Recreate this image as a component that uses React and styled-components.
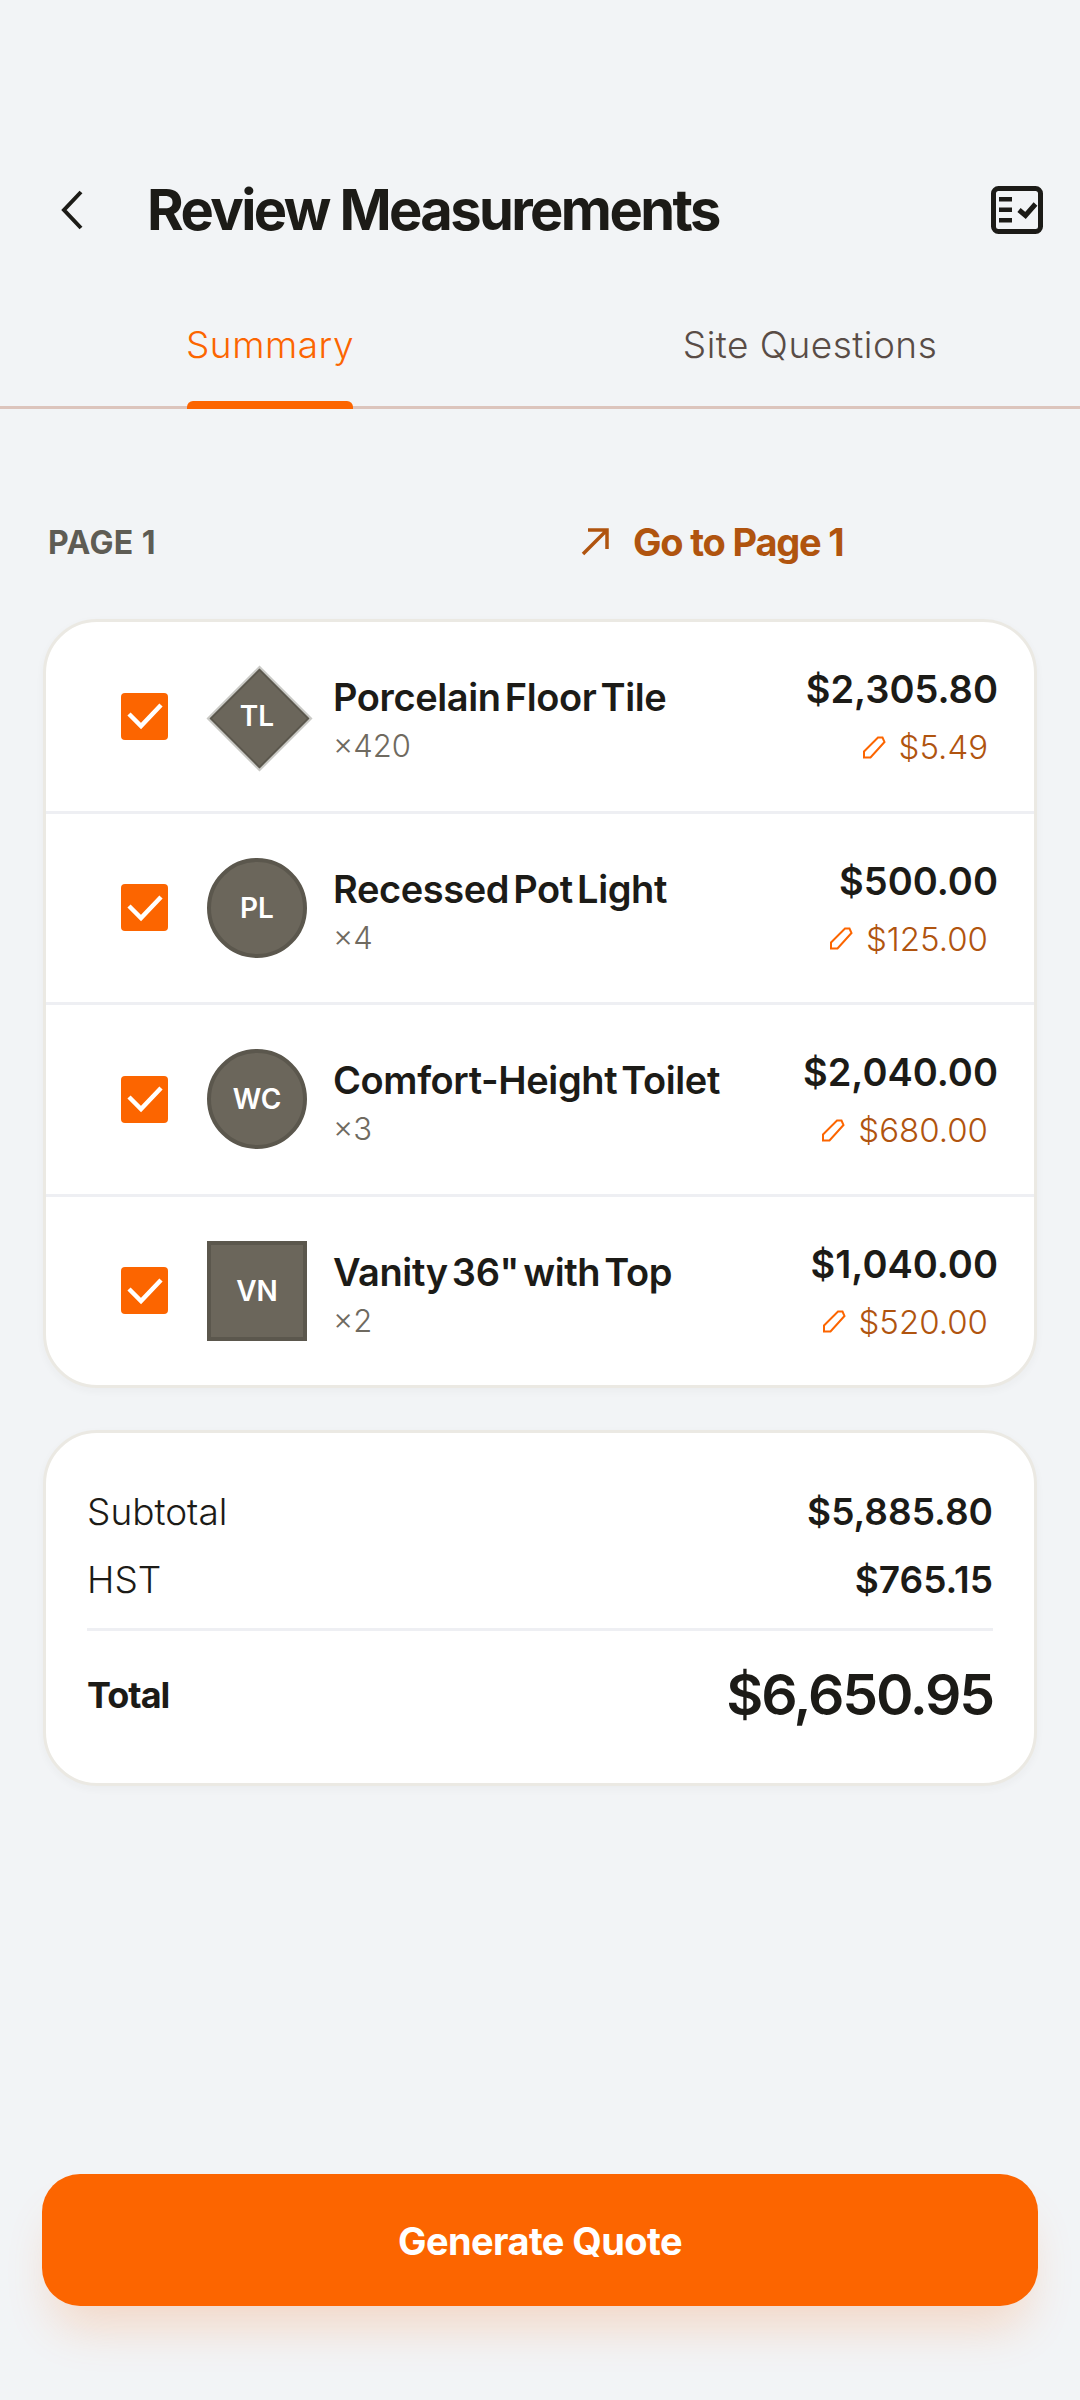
import React from 'react';
import styled, { createGlobalStyle } from 'styled-components';

const items = [
  { id: 'TL', shape: 'diamond', name: 'Porcelain Floor Tile', qty: '×420', total: '$2,305.80', unit: '$5.49' },
  { id: 'PL', shape: 'circle', name: 'Recessed Pot Light', qty: '×4', total: '$500.00', unit: '$125.00' },
  { id: 'WC', shape: 'circle', name: 'Comfort-Height Toilet', qty: '×3', total: '$2,040.00', unit: '$680.00' },
  { id: 'VN', shape: 'square', name: 'Vanity 36" with Top', qty: '×2', total: '$1,040.00', unit: '$520.00' },
];

function App() {
  return (
    <Page>
      <GlobalStyle />
      <Header>
        <BackButton>
          <svg width="24" height="42" viewBox="0 0 24 42" fill="none">
            <path d="M21 3 L4 21 L21 39" stroke="#1c1b17" strokeWidth="4" />
          </svg>
        </BackButton>
        <Title>Review Measurements</Title>
        <ChecklistButton>
          <svg width="52" height="48" viewBox="0 0 52 48" fill="none">
            <rect x="2.5" y="2.5" width="47" height="43" rx="5" stroke="#1c1b17" strokeWidth="5" />
            <path d="M8 11h13v4.5H8zM8 21.500h13v4.500H8zM8 32h13v4.500H8z" fill="#1c1b17" />
            <path d="M28 24l6.500 5.500L44.500 18" stroke="#1c1b17" strokeWidth="5" />
          </svg>
        </ChecklistButton>
      </Header>

      <Tabs>
        <Tab $active>Summary</Tab>
        <Tab>Site Questions</Tab>
      </Tabs>

      <SectionHead>
        <PageLabel>PAGE 1</PageLabel>
        <PageLink>
          <svg width="28" height="28" viewBox="0 0 28 28" fill="none">
            <path d="M2 26 L26 2 M7 2 H26 V21" stroke="#b0540f" strokeWidth="3.500" />
          </svg>
          <span>Go to Page 1</span>
        </PageLink>
      </SectionHead>

      <Card>
        {items.map((item) => (
          <Row key={item.id}>
            <CheckBox>
              <svg width="36" height="28" viewBox="0 0 36 28" fill="none">
                <path d="M2 12 L14 24 L34 3" stroke="#fff" strokeWidth="4.500" />
              </svg>
            </CheckBox>
            <Thumb $shape={item.shape}>
              <span>{item.id}</span>
            </Thumb>
            <ItemText>
              <ItemName>{item.name}</ItemName>
              <ItemQty>{item.qty}</ItemQty>
            </ItemText>
            <Prices>
              <ItemTotal>{item.total}</ItemTotal>
              <UnitPrice>
                <svg width="23" height="23" viewBox="0 0 23 23" fill="none">
                  <path d="M1 15.500 L15 1.500 H19.500 L21.500 6 L7.500 21.500 H1 Z" stroke="#fc6500" strokeWidth="2" />
                </svg>
                <span>{item.unit}</span>
              </UnitPrice>
            </Prices>
          </Row>
        ))}
      </Card>

      <SummaryCard>
        <SummaryRow>
          <SummaryLabel>Subtotal</SummaryLabel>
          <SummaryValue>$5,885.80</SummaryValue>
        </SummaryRow>
        <SummaryRow>
          <SummaryLabel>HST</SummaryLabel>
          <SummaryValue>$765.15</SummaryValue>
        </SummaryRow>
        <TotalRow>
          <TotalLabel>Total</TotalLabel>
          <TotalValue>$6,650.95</TotalValue>
        </TotalRow>
      </SummaryCard>

      <Footer>
        <GenerateButton>Generate Quote</GenerateButton>
      </Footer>
    </Page>
  );
}

const GlobalStyle = createGlobalStyle`
  html, body {
    margin: 0;
    padding: 0;
    background: #f2f4f6;
  }
  * {
    box-sizing: border-box;
  }
`;

const Page = styled.div`
  width: 1080px;
  height: 2400px;
  display: flex;
  flex-direction: column;
  background: #f2f4f6;
  color: #1c1b17;
  font-family: Inter, "Liberation Sans", sans-serif;
`;

const Header = styled.header`
  display: flex;
  align-items: center;
  height: 100px;
  margin-top: 160px;
  padding: 0 37px 0 60px;
`;

const BackButton = styled.div`
  display: flex;
  width: 87px;
`;

const Title = styled.h1`
  flex: 1;
  margin: 0;
  font-size: 56px;
  font-weight: 700;
  letter-spacing: -2.6px;
`;

const ChecklistButton = styled.div`
  display: flex;
`;

const Tabs = styled.nav`
  display: flex;
  height: 149px;
  border-bottom: 3px solid #dcc4bc;
`;

const Tab = styled.div`
  position: relative;
  flex: 1;
  display: flex;
  justify-content: center;
  padding-top: 63px;
  font-size: 37px;
  line-height: 44px;
  font-weight: 300;
  letter-spacing: 0.5px;
  color: ${(p) => (p.$active ? '#fc6500' : '#594c46')};

  ${(p) =>
    p.$active &&
    `
    &::after {
      content: '';
      position: absolute;
      left: 187px;
      bottom: -3px;
      width: 166px;
      height: 8px;
      border-radius: 6px 6px 0 0;
      background: #fc6500;
    }
  `}
`;

const SectionHead = styled.div`
  display: flex;
  align-items: center;
  height: 60px;
  margin-top: 103px;
  padding-left: 48px;
`;

const PageLabel = styled.div`
  width: 533px;
  font-size: 32px;
  font-weight: 700;
  letter-spacing: 0.4px;
  color: #5e5c54;
`;

const PageLink = styled.div`
  display: flex;
  align-items: center;
  gap: 24px;
  font-size: 38px;
  font-weight: 700;
  letter-spacing: -1.2px;
  color: #b0540f;
`;

const Card = styled.section`
  margin: 47px 43px 0;
  border: 3px solid #ebe9e3;
  border-radius: 54px;
  background: #fff;
  box-shadow: 0 3px 8px rgba(60, 50, 40, 0.04);
  overflow: hidden;
`;

const Row = styled.div`
  display: flex;
  align-items: center;
  box-sizing: content-box;
  height: 188.5px;
  padding: 0 36px 0 75px;

  & + & {
    border-top: 3px solid #eeeff3;
  }
`;

const CheckBox = styled.div`
  display: flex;
  align-items: center;
  justify-content: center;
  width: 47px;
  height: 47px;
  margin-right: 39px;
  border-radius: 4px;
  background: #fc6500;
`;

const Thumb = styled.div`
  position: relative;
  display: flex;
  align-items: center;
  justify-content: center;
  flex: none;
  width: 100px;
  height: 100px;
  margin-right: 26px;
  font-size: 28px;
  font-weight: 600;
  color: #fff;
  ${(p) =>
    p.$shape !== 'diamond' &&
    `
    background: #6b665b;
    border: 4px solid #5b574d;
  `}
  border-radius: ${(p) => (p.$shape === 'circle' ? '50%' : '0')};

  span {
    position: relative;
  }

  ${(p) =>
    p.$shape === 'diamond' &&
    `
    &::before {
      content: '';
      position: absolute;
      left: 16.5px;
      top: 16.5px;
      width: 67px;
      height: 67px;
      transform: rotate(45deg);
      background: #6b665b;
      border: 2px solid #5b574d;
      outline: 2px solid #c9c9c5;
    }
  `}
`;

const ItemText = styled.div`
  flex: 1;
  min-width: 0;
  margin-top: 7px;
`;

const ItemName = styled.div`
  font-size: 38px;
  line-height: 46px;
  font-weight: 600;
  letter-spacing: -0.4px;
  word-spacing: -5px;
  white-space: nowrap;
`;

const ItemQty = styled.div`
  margin-top: 7px;
  font-size: 31px;
  line-height: 38px;
  font-weight: 300;
  color: #6f6a60;
`;

const Prices = styled.div`
  display: flex;
  flex-direction: column;
  align-items: flex-end;
  margin-top: 1px;
`;

const ItemTotal = styled.div`
  font-size: 38px;
  line-height: 46px;
  font-weight: 600;
`;

const UnitPrice = styled.div`
  display: flex;
  align-items: center;
  gap: 13px;
  margin-top: 15px;
  padding-right: 10px;
  font-size: 33px;
  line-height: 40px;
  font-weight: 300;
  color: #b0540f;
`;

const SummaryCard = styled.section`
  margin: 42px 43px 0;
  padding: 44px 41px 54px;
  border: 3px solid #ebe9e3;
  border-radius: 54px;
  background: #fff;
  box-shadow: 0 3px 8px rgba(60, 50, 40, 0.04);
`;

const SummaryRow = styled.div`
  display: flex;
  justify-content: space-between;
  align-items: center;
  height: 68px;
`;

const SummaryLabel = styled.div`
  font-size: 37px;
  font-weight: 300;
`;

const SummaryValue = styled.div`
  font-size: 37px;
  font-weight: 600;
`;

const TotalRow = styled.div`
  display: flex;
  justify-content: space-between;
  align-items: center;
  margin-top: 15px;
  padding-top: 29px;
  border-top: 3px solid #eeeff3;
`;

const TotalLabel = styled.div`
  font-size: 36px;
  font-weight: 700;
  letter-spacing: -1px;
`;

const TotalValue = styled.div`
  font-size: 57px;
  font-weight: 600;
  letter-spacing: -2.2px;
`;

const Footer = styled.div`
  margin-top: auto;
  padding: 0 42px 94px;
`;

const GenerateButton = styled.button`
  display: block;
  width: 100%;
  height: 132px;
  padding-top: 3px;
  border: none;
  border-radius: 38px;
  background: #fc6500;
  color: #fff;
  font-family: inherit;
  font-size: 38px;
  font-weight: 700;
  letter-spacing: -0.6px;
  box-shadow: 0 32px 48px -12px rgba(252, 101, 0, 0.2);
`;

export default App;
